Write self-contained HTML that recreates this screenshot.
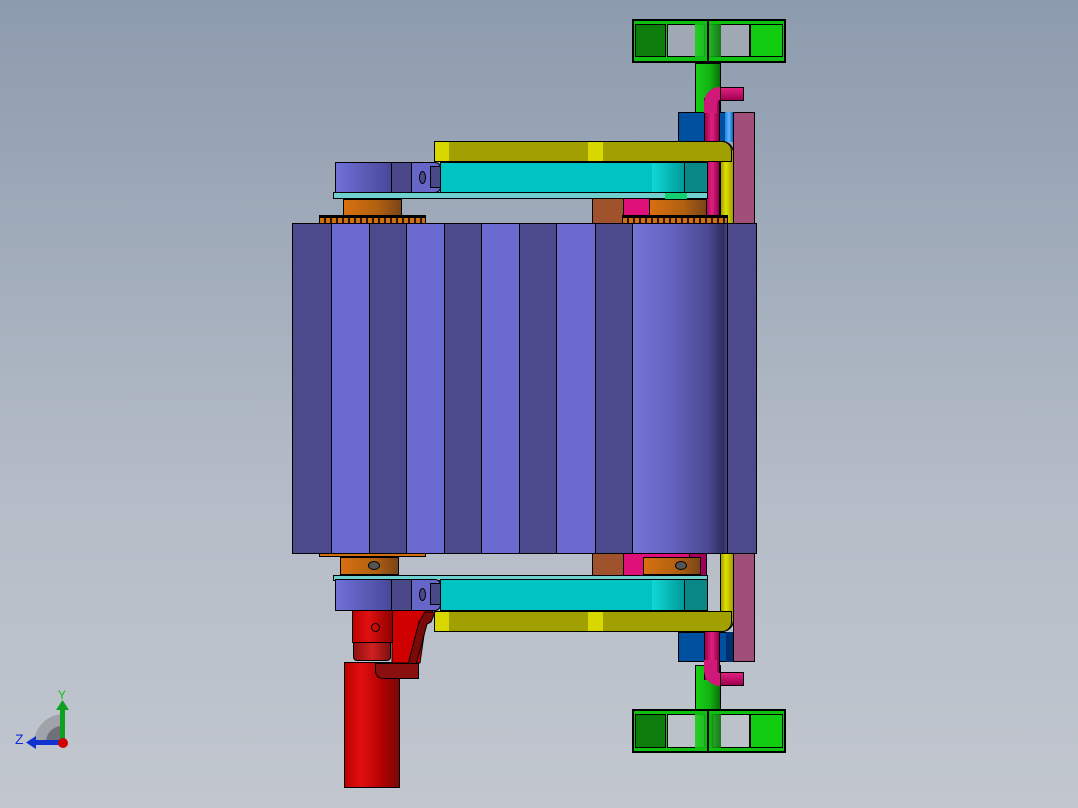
<!DOCTYPE html>
<html><head><meta charset="utf-8"><style>
html,body{margin:0;padding:0}
body{width:1078px;height:808px;position:relative;overflow:hidden;background:linear-gradient(#8d9bae,#b4bcc7 60%,#c2c7cf);font-family:"Liberation Sans",sans-serif}
.b{position:absolute;box-sizing:border-box;border:1px solid #000}
.n{position:absolute;box-sizing:border-box}
.dk{background:#4c4a8c}.lt{background:#6a6ad0}
.cyl{background:linear-gradient(90deg,#16d016,#12b012 60%,#0a700a)}
.pul{background:linear-gradient(90deg,#d87010,#b06010 60%,#7a4418)}
.tube{background:linear-gradient(90deg,#a00050,#e02080 50%,#900048)}
</style></head><body>

<!-- TOP green frame -->
<div class="b" style="left:632px;top:19px;width:154px;height:44px;background:#10c010;border-width:2px"></div>
<div class="b" style="left:635px;top:24px;width:31px;height:33px;background:#0c7c0c"></div>
<div class="b" style="left:667px;top:24px;width:38px;height:33px;background:#a0a8b4"></div>
<div class="b" style="left:708px;top:24px;width:42px;height:33px;background:#a0a8b4"></div>
<div class="b" style="left:750px;top:24px;width:33px;height:33px;background:#12cc12"></div>
<div class="n cyl" style="left:695px;top:24px;width:26px;height:33px;opacity:.9"></div>
<div class="b" style="left:707px;top:20px;width:2px;height:42px;background:#000"></div>
<div class="b cyl" style="left:695px;top:63px;width:26px;height:50px"></div>

<!-- BOTTOM green frame -->
<div class="b cyl" style="left:695px;top:665px;width:26px;height:46px"></div>
<div class="b" style="left:632px;top:709px;width:154px;height:44px;background:#10c010;border-width:2px"></div>
<div class="b" style="left:635px;top:714px;width:31px;height:34px;background:#0c7c0c"></div>
<div class="b" style="left:667px;top:714px;width:38px;height:34px;background:#bcc2ca"></div>
<div class="b" style="left:712px;top:714px;width:38px;height:34px;background:#bcc2ca"></div>
<div class="b" style="left:750px;top:714px;width:33px;height:34px;background:#12cc12"></div>
<div class="n cyl" style="left:695px;top:714px;width:26px;height:34px;opacity:.9"></div>
<div class="b" style="left:707px;top:710px;width:2px;height:42px;background:#000"></div>

<!-- right mauve plate and blue blocks -->
<div class="b" style="left:733px;top:112px;width:22px;height:550px;background:#a05078"></div>
<div class="b" style="left:678px;top:112px;width:56px;height:30px;background:#0050a0"></div>
<div class="n" style="left:725px;top:112px;width:8px;height:30px;background:linear-gradient(90deg,#2080e0,#60b8ff,#1060c0)"></div>
<div class="b" style="left:678px;top:632px;width:56px;height:30px;background:#0050a0"></div>
<div class="n" style="left:726px;top:632px;width:7px;height:30px;background:#003070"></div>

<!-- pink tubes -->
<div class="b tube" style="left:704px;top:98px;width:16px;height:126px;border-width:0 1px"></div>
<div class="n" style="left:704px;top:87px;height:26px;border:13px solid #d01878;border-right:none;border-bottom:none;border-radius:16px 0 0 0;width:30px"></div>
<div class="b tube" style="left:720px;top:87px;width:24px;height:14px;background:linear-gradient(#e02080,#a00050)"></div>
<div class="b tube" style="left:704px;top:630px;width:16px;height:50px;border-width:0 1px"></div>
<div class="n" style="left:704px;top:660px;width:30px;height:26px;border:13px solid #d01878;border-right:none;border-top:none;border-radius:0 0 0 16px"></div>
<div class="b tube" style="left:720px;top:672px;width:24px;height:14px;background:linear-gradient(#e02080,#a00050)"></div>

<!-- yellow U bar -->
<div class="b" style="left:720px;top:141px;width:14px;height:491px;background:linear-gradient(90deg,#a0a000,#e0e000 40%,#a0a000);border-radius:0 12px 12px 0"></div>
<div class="b" style="left:434px;top:141px;width:298px;height:21px;background:#a0a000;border-radius:0 10px 0 0"></div>
<div class="n" style="left:435px;top:142px;width:14px;height:19px;background:#d8d800"></div>
<div class="n" style="left:588px;top:142px;width:15px;height:19px;background:#d8d800"></div>
<div class="b" style="left:434px;top:611px;width:298px;height:21px;background:#a0a000;border-radius:0 0 10px 0"></div>
<div class="n" style="left:435px;top:612px;width:14px;height:19px;background:#d8d800"></div>
<div class="n" style="left:588px;top:612px;width:15px;height:19px;background:#d8d800"></div>

<!-- top arm -->
<div class="b" style="left:689px;top:192px;width:18px;height:32px;background:#a00058"></div>
<div class="b" style="left:440px;top:162px;width:268px;height:31px;background:#00c4c4"></div>
<div class="n" style="left:652px;top:163px;width:33px;height:29px;background:linear-gradient(90deg,#10d8d8,#009898)"></div>
<div class="b" style="left:684px;top:162px;width:24px;height:31px;background:#0a8888"></div>
<div class="b" style="left:335px;top:162px;width:57px;height:31px;background:linear-gradient(90deg,#7070d8,#48489a)"></div>
<div class="b" style="left:391px;top:162px;width:21px;height:31px;background:#4a4888"></div>
<div class="b" style="left:411px;top:162px;width:30px;height:31px;background:#6666c8;border-radius:0 6px 6px 0"></div>
<div class="b" style="left:419px;top:171px;width:7px;height:13px;border-radius:50%;background:#4a4888"></div>
<div class="b" style="left:430px;top:166px;width:11px;height:22px;background:#4a4888"></div>
<div class="b" style="left:333px;top:192px;width:375px;height:7px;background:#70d0d0"></div>
<div class="b" style="left:592px;top:198px;width:32px;height:26px;background:#a0522d"></div>
<div class="b" style="left:623px;top:198px;width:67px;height:26px;background:#e0107a"></div>
<div class="n" style="left:665px;top:193px;width:22px;height:7px;background:#10d070"></div>
<div class="b pul" style="left:343px;top:199px;width:59px;height:17px"></div>
<div class="b pul" style="left:649px;top:199px;width:58px;height:17px"></div>
<div class="b" style="left:319px;top:215px;width:107px;height:9px;background:repeating-linear-gradient(90deg,#d07010 0 4px,#301800 4px 6px);border-top:3px solid #000"></div>
<div class="b" style="left:622px;top:215px;width:106px;height:9px;background:repeating-linear-gradient(90deg,#d07010 0 4px,#301800 4px 6px);border-top:3px solid #000"></div>

<!-- bottom arm -->
<div class="b" style="left:592px;top:552px;width:32px;height:24px;background:#a0522d"></div>
<div class="b" style="left:623px;top:552px;width:67px;height:24px;background:#e0107a"></div>
<div class="b" style="left:689px;top:552px;width:18px;height:28px;background:#a00058"></div>
<div class="b" style="left:319px;top:553px;width:107px;height:4px;background:#d07010"></div>
<div class="b pul" style="left:340px;top:557px;width:59px;height:18px"></div>
<div class="b pul" style="left:643px;top:557px;width:58px;height:18px"></div>
<div class="b" style="left:368px;top:561px;width:12px;height:9px;border-radius:50%;background:#555"></div>
<div class="b" style="left:675px;top:561px;width:12px;height:9px;border-radius:50%;background:#555"></div>
<div class="b" style="left:333px;top:575px;width:375px;height:6px;background:#70d0d0"></div>
<div class="b" style="left:440px;top:579px;width:268px;height:32px;background:#00c4c4"></div>
<div class="n" style="left:652px;top:580px;width:33px;height:30px;background:linear-gradient(90deg,#10d8d8,#009898)"></div>
<div class="b" style="left:684px;top:579px;width:24px;height:32px;background:#0a8888"></div>

<!-- red motor -->
<div class="b" style="left:344px;top:662px;width:56px;height:126px;background:linear-gradient(90deg,#c00000,#e01010 30%,#b00000 70%,#7a0808)"></div>
<svg class="n" style="left:385px;top:608px" width="55" height="75" viewBox="0 0 55 75">
<path d="M7 2 L48 2 L40 20 L35 55 L7 55 Z" fill="#d00000" stroke="#000"/>
<path d="M40 4 L50 4 L46 14 L42 16 L28 68 L20 68 L34 14 Z" fill="#7a0a0a" stroke="#000"/>
</svg>
<div class="b" style="left:352px;top:608px;width:41px;height:35px;background:linear-gradient(90deg,#c00000,#e01010 40%,#900000)"></div>
<div class="b" style="left:371px;top:623px;width:9px;height:9px;border-radius:50%;background:transparent"></div>
<div class="b" style="left:353px;top:642px;width:38px;height:19px;background:linear-gradient(90deg,#901010,#d02020 50%,#801010);border-radius:0 0 4px 4px"></div>
<div class="b" style="left:375px;top:663px;width:44px;height:16px;background:#8a1010;border-radius:0 0 0 8px"></div>

<div class="b" style="left:335px;top:579px;width:57px;height:32px;background:linear-gradient(90deg,#7070d8,#48489a)"></div>
<div class="b" style="left:391px;top:579px;width:21px;height:32px;background:#4a4888"></div>
<div class="b" style="left:411px;top:579px;width:30px;height:32px;background:#6666c8;border-radius:0 6px 6px 0"></div>
<div class="b" style="left:419px;top:588px;width:7px;height:13px;border-radius:50%;background:#4a4888"></div>
<div class="b" style="left:430px;top:583px;width:11px;height:22px;background:#4a4888"></div>

<!-- drum -->
<div class="b dk" style="left:292px;top:223px;width:40px;height:331px"></div>
<div class="b lt" style="left:331px;top:223px;width:39px;height:331px"></div>
<div class="b dk" style="left:369px;top:223px;width:38px;height:331px"></div>
<div class="b lt" style="left:406px;top:223px;width:39px;height:331px"></div>
<div class="b dk" style="left:444px;top:223px;width:38px;height:331px"></div>
<div class="b lt" style="left:481px;top:223px;width:39px;height:331px"></div>
<div class="b dk" style="left:519px;top:223px;width:38px;height:331px"></div>
<div class="b lt" style="left:556px;top:223px;width:40px;height:331px"></div>
<div class="b dk" style="left:595px;top:223px;width:38px;height:331px"></div>
<div class="b" style="left:632px;top:223px;width:96px;height:331px;background:linear-gradient(90deg,#7474d8,#6464c0 40%,#4a4890 80%,#302c60 95%,#4c4a8c);border-right:none"></div>
<div class="b dk" style="left:727px;top:223px;width:30px;height:331px"></div>

<!-- triad -->
<svg class="n" style="left:14px;top:686px" width="60" height="66" viewBox="0 0 60 66">
<path d="M20 56 A30 30 0 0 1 48 28 L48 56 Z" fill="#a0a4aa"/>
<path d="M32 56 A16 16 0 0 1 48 40 L48 56 Z" fill="#6e7278"/>
<rect x="46" y="22" width="5" height="34" fill="#10a020"/>
<path d="M42 24 L48.5 14 L55 24 Z" fill="#10a020"/>
<rect x="20" y="54" width="28" height="5" fill="#1030d0"/>
<path d="M22 50 L12 56.5 L22 63 Z" fill="#1030d0"/>
<circle cx="49" cy="57" r="5" fill="#d00000"/>
<text x="44" y="13" fill="#10c010" font-size="12" font-family="Liberation Sans">Y</text>
<text x="1" y="58" fill="#1030e0" font-size="14" font-family="Liberation Sans">Z</text>
</svg>
</body></html>
